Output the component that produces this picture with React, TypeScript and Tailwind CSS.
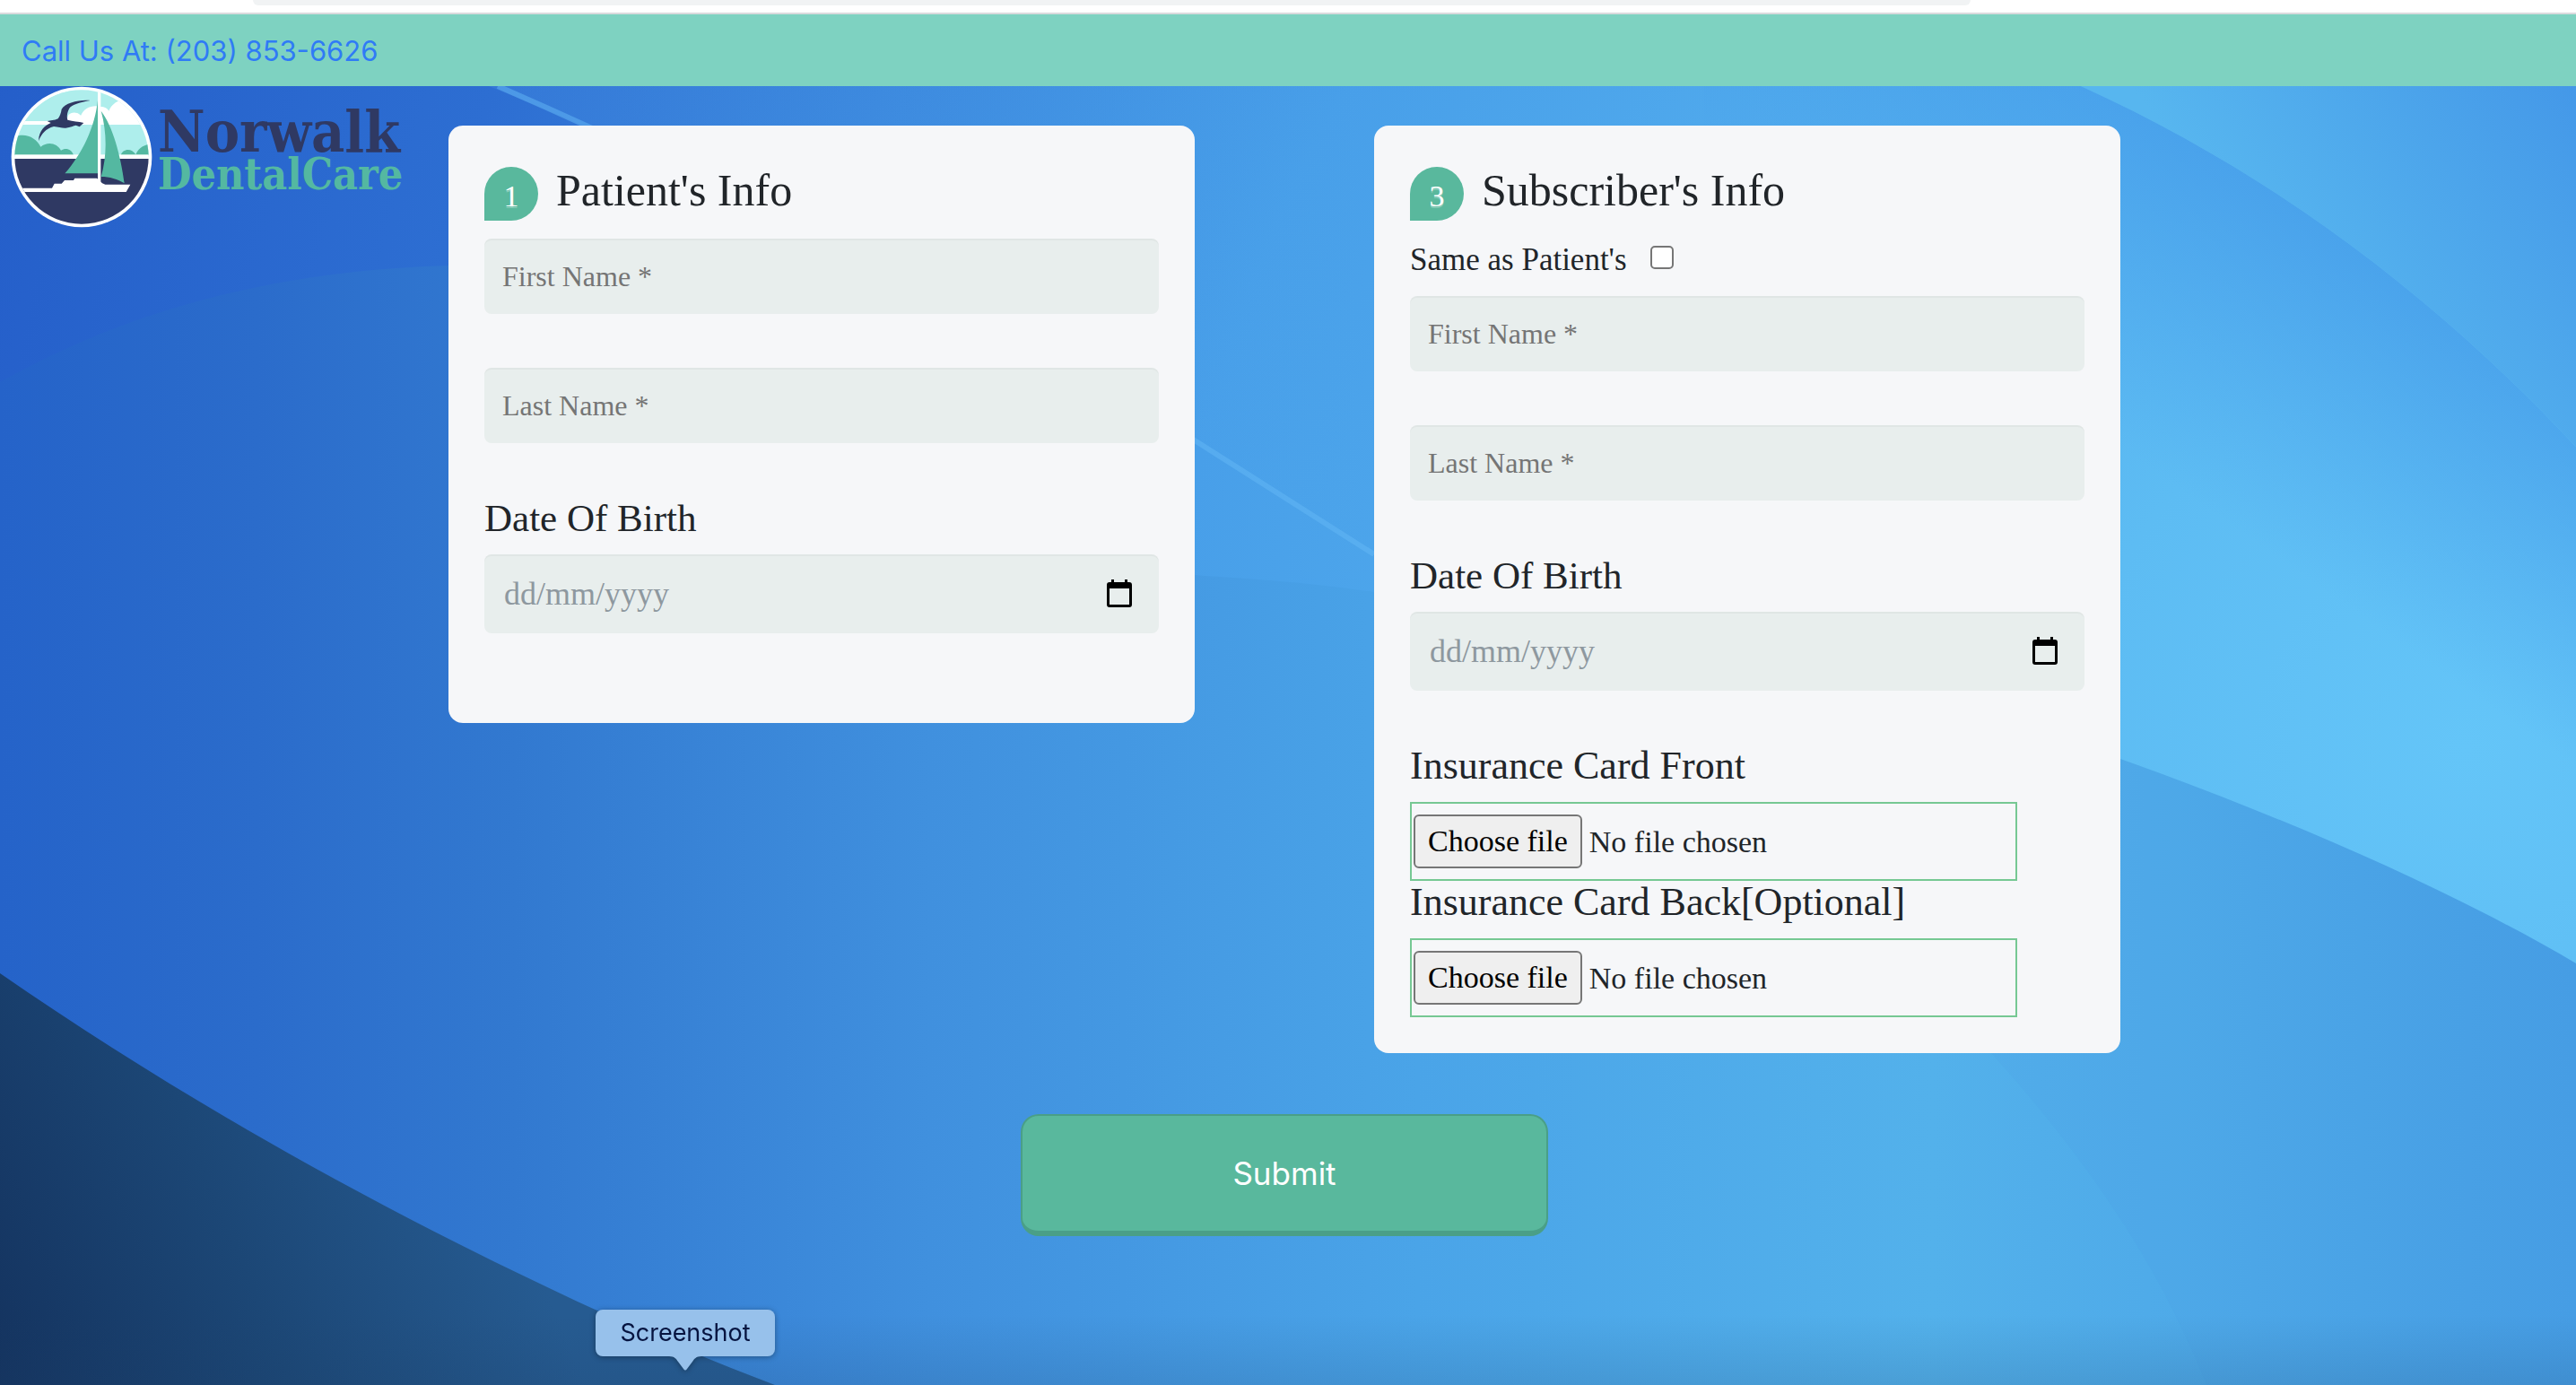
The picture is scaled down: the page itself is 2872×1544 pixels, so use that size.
import React, { useId, useRef, useState } from "react";

function Backdrop() {
  return (
    <svg
      aria-hidden="true"
      viewBox="0 0 2872 1448"
      preserveAspectRatio="none"
      className="absolute inset-0 h-full w-full"
    >
      <defs>
        <radialGradient id="sky" gradientUnits="userSpaceOnUse" cx="2750" cy="740" r="2900">
          <stop offset="0" stopColor="#64c5f8" />
          <stop offset="0.15" stopColor="#5dbcf3" />
          <stop offset="0.3" stopColor="#53aeee" />
          <stop offset="0.5" stopColor="#489fe9" />
          <stop offset="0.66" stopColor="#3a86dd" />
          <stop offset="0.8" stopColor="#2d6ed2" />
          <stop offset="1" stopColor="#245dc9" />
        </radialGradient>
        <linearGradient id="ray" x1="0" y1="0" x2="1" y2="0">
          <stop offset="0" stopColor="#4a97e6" stopOpacity="0.25" />
          <stop offset="1" stopColor="#56b2f0" stopOpacity="0" />
        </linearGradient>
        <linearGradient id="wave" gradientUnits="userSpaceOnUse" x1="0" y1="0" x2="2872" y2="0">
          <stop offset="0" stopColor="#2563c9" />
          <stop offset="0.1" stopColor="#2b6ccb" />
          <stop offset="0.2" stopColor="#3279d0" />
          <stop offset="0.36" stopColor="#4090de" />
          <stop offset="0.55" stopColor="#4aa4e8" />
          <stop offset="0.75" stopColor="#53b1eb" />
          <stop offset="1" stopColor="#479fe5" />
        </linearGradient>
        <linearGradient id="corner" gradientUnits="userSpaceOnUse" x1="2560" y1="240" x2="2872" y2="0">
          <stop offset="0" stopColor="#57b6ef" />
          <stop offset="1" stopColor="#4498e8" />
        </linearGradient>
        <linearGradient id="edge" gradientUnits="userSpaceOnUse" x1="2640" y1="150" x2="2430" y2="450">
          <stop offset="0" stopColor="#469eea" stopOpacity="0.9" />
          <stop offset="1" stopColor="#4aa3ec" stopOpacity="0" />
        </linearGradient>
        <linearGradient id="deep" gradientUnits="userSpaceOnUse" x1="0" y1="1448" x2="560" y2="1220">
          <stop offset="0" stopColor="#14335f" />
          <stop offset="0.5" stopColor="#1c4776" />
          <stop offset="1" stopColor="#265b91" />
        </linearGradient>
        <linearGradient id="floor" x1="0" y1="0" x2="0" y2="1">
          <stop offset="0" stopColor="#1c3f66" stopOpacity="0" />
          <stop offset="1" stopColor="#1c3f66" stopOpacity="0.16" />
        </linearGradient>
      </defs>
      <rect width="2872" height="1448" fill="url(#sky)" />
      <path d="M545 0C820 110 1120 270 1332 397L1532 524V0Z" fill="url(#ray)" />
      <path d="M2320 0C2540 100 2720 240 2872 402V900H1900V0Z" fill="url(#edge)" />
      <path d="M2320 0C2540 100 2720 240 2872 402V0Z" fill="url(#corner)" />
      <path d="M0 330C160 240 330 205 500 200C900 470 1200 530 1332 545C1400 550 1450 552 1532 564C1840 600 2100 660 2364 750C2560 820 2740 900 2872 978V1448H0Z" fill="url(#wave)" />
      <path d="M555 0C830 120 1120 270 1332 395L1532 522" fill="none" stroke="#64b8f5" strokeWidth="6" opacity="0.5" />
      <path d="M2220 1078C2330 1200 2410 1320 2460 1448H2872V978C2740 900 2560 820 2364 750Z" fill="#3d8fe0" opacity="0.06" />
      <path d="M0 989C160 1100 340 1205 520 1295C640 1355 750 1405 864 1448H0Z" fill="url(#deep)" />
      <rect y="1370" width="2872" height="78" fill="url(#floor)" />
    </svg>
  );
}

function Emblem() {
  return (
    <svg viewBox="36 286 474 472" className="size-[158px] shrink-0" role="img" aria-label="Norwalk Dental Care emblem">
      <defs>
        <clipPath id="disc">
          <circle cx="273" cy="522" r="224" />
        </clipPath>
      </defs>
      <circle cx="273" cy="522" r="235" fill="#fff" />
      <g clipPath="url(#disc)">
        <rect x="36" y="286" width="474" height="236" fill="#aeeeec" />
        <path d="M36 402H228C222 380 246 370 270 384C280 358 310 346 336 354C350 354 360 360 364 368C374 344 396 330 420 330H510V414H36Z" fill="#fff" />
        <rect x="36" y="286" width="210" height="116" fill="#aeeeec" />
        <path d="M226 402C222 384 234 372 252 374C262 374 268 380 270 384V404Z" fill="#fff" />
        <path d="M36 460C80 436 120 456 136 488C160 468 192 476 204 500C220 490 240 496 246 516H36Z" fill="#54b8a1" />
        <path d="M404 516C410 494 440 490 454 514C462 494 480 480 510 478V516Z" fill="#54b8a1" />
        <rect x="36" y="514" width="474" height="14" fill="#fff" />
        <rect x="36" y="528" width="474" height="230" fill="#2f3963" />
        <path d="M36 626H174L182 611H206L216 600H246L250 593H324L342 610L352 614H436L422 639H36Z" fill="#fff" />
        <rect x="327" y="286" width="10" height="322" fill="#fff" />
        <path d="M327 332C318 420 276 510 217 577H327Z" fill="#54b8a1" />
        <path d="M338 368C378 420 404 520 416 610C394 596 366 588 338 588C358 520 358 440 338 368Z" fill="#54b8a1" />
        <path d="M302 333C262 330 218 342 206 362C204 376 200 386 194 394C182 400 168 400 158 402L170 408C150 416 130 434 129 468C140 444 152 428 180 420C196 422 208 426 220 425C236 422 246 418 254 416L266 421L280 408C262 402 244 404 226 398C222 384 226 368 234 356C252 342 276 338 302 333Z" fill="#2f3963" />
      </g>
    </svg>
  );
}

function StepTitle({ step, children }: { step: number; children: React.ReactNode }) {
  return (
    <div className="flex items-start gap-5 pt-1.5">
      <span className="flex size-[60px] items-center justify-center rounded-full rounded-bl-none bg-[#59b89d] pt-1.5 text-[34px] leading-none text-white [text-shadow:0_2px_0_rgba(255,255,255,0.3)]">
        {step}
      </span>
      <h2 className="text-[50px] leading-[52px]">{children}</h2>
    </div>
  );
}

const fieldBox =
  "w-full rounded-lg bg-[#e8eeed] px-5 shadow-[inset_0_2px_0_rgba(0,0,0,0.03)]";

function TextField({ label }: { label: string }) {
  return (
    <input
      type="text"
      aria-label={label}
      placeholder={`${label} *`}
      className={`${fieldBox} mb-[60px] block h-[84px] text-[32px] text-[#757575] placeholder:text-[#757575]`}
    />
  );
}

function CalendarIcon() {
  return (
    <svg viewBox="0 0 28 32" className="h-8 w-7" aria-hidden="true">
      <path d="M5 0H8V3H20V0H23V3H25A3 3 0 0 1 28 6V28A3 3 0 0 1 25 31H3A3 3 0 0 1 0 28V6A3 3 0 0 1 3 3H5ZM3 10V28H25V10Z" fill="#000" fillRule="evenodd" />
    </svg>
  );
}

function DateField() {
  const id = useId();
  return (
    <div className="mb-[60px]">
      <label htmlFor={id} className="block pb-4 text-[43px] leading-[48px]">
        Date Of Birth
      </label>
      <div className={`${fieldBox} flex h-[88px] items-center justify-between pr-[30px]`}>
        <input
          id={id}
          type="text"
          inputMode="numeric"
          placeholder="dd/mm/yyyy"
          className="h-full min-w-0 flex-1 bg-transparent pl-0.5 text-[36px] placeholder:text-[#8e989f]"
        />
        <button type="button" aria-label="Open calendar">
          <CalendarIcon />
        </button>
      </div>
    </div>
  );
}

function FileField({ label }: { label: string }) {
  const id = useId();
  const input = useRef<HTMLInputElement>(null);
  const [name, setName] = useState("No file chosen");
  return (
    <div>
      <label htmlFor={id} className="block pb-4 text-[44px] leading-[48px]">
        {label}
      </label>
      <div className="flex h-[88px] w-[90%] items-center gap-2 border-2 border-[#76c893] px-0.5 text-[34px]">
        <input
          ref={input}
          id={id}
          type="file"
          className="sr-only"
          onChange={(e) => setName(e.target.files?.[0]?.name ?? "No file chosen")}
        />
        <button
          type="button"
          onClick={() => input.current?.click()}
          className="h-[60px] rounded-md border-2 border-[#767676] bg-[#efefef] px-3.5 leading-none text-black"
        >
          Choose file
        </button>
        <span>{name}</span>
      </div>
    </div>
  );
}

function Card({ children }: { children: React.ReactNode }) {
  return <section className="rounded-2xl bg-[#f6f7f9] p-10">{children}</section>;
}

export default function App() {
  return (
    <div className="flex min-h-screen flex-col bg-white font-['Liberation_Serif',serif] text-[#212529]">
      <div className="h-4 border-b-2 border-[#d9dadd] bg-white pr-[675px] pl-[282px]">
        <div className="h-1.5 rounded-b-3xl bg-[#f1f3f4]" />
      </div>
      <header className="flex h-20 items-center bg-[#7ed2c1] px-6 pt-0.5">
        <a href="tel:2038536626" className="font-['Inter',sans-serif] text-[31px] text-[#2f7bf6]">
          Call Us At: (203) 853-6626
        </a>
      </header>

      <div className="relative flex-1">
        <Backdrop />
        <main className="relative grid grid-cols-[1fr_minmax(0,1864px)_1fr] pr-2">
          <div className="flex items-start gap-1.5 pl-3">
            <Emblem />
            <div className="pt-7 font-['DejaVu_Serif_Condensed','DejaVu_Serif',serif] font-bold">
              <div className="text-[64px] leading-[46px] text-[#2f3963]">Norwalk</div>
              <div className="text-[48px] leading-[48px] text-[#54b8a1]">DentalCare</div>
            </div>
          </div>
          <form onSubmit={(e) => e.preventDefault()} className="flex flex-col items-center pt-11">
            <div className="grid w-full grid-cols-2 items-start gap-[200px]">
              <Card>
                <StepTitle step={1}>Patient's Info</StepTitle>
                <div className="pt-5">
                  <TextField label="First Name" />
                  <TextField label="Last Name" />
                  <DateField />
                </div>
              </Card>
              <Card>
                <StepTitle step={3}>Subscriber's Info</StepTitle>
                <div className="pt-5">
                  <label className="flex h-16 items-start gap-[26px] pt-1 text-[35px] leading-[40px]">
                    Same as Patient's
                    <input
                      type="checkbox"
                      className="mt-1 size-[26px] appearance-none rounded-[5px] border-2 border-[#767676] bg-white checked:bg-[#2f7bf6]"
                    />
                  </label>
                  <TextField label="First Name" />
                  <TextField label="Last Name" />
                  <DateField />
                  <FileField label="Insurance Card Front" />
                  <FileField label="Insurance Card Back[Optional]" />
                </div>
              </Card>
            </div>
            <button
              type="submit"
              className="mt-[68px] h-[136px] w-[588px] rounded-[20px] border-2 border-b-[6px] border-[#4a9f87] bg-[#59b89d] font-['Inter',sans-serif] text-[35px] text-white"
            >
              Submit
            </button>
          </form>
        </main>

        <div role="tooltip" className="absolute bottom-4 left-[664px] flex flex-col items-center drop-shadow-[0_1px_3px_rgba(0,0,0,0.35)]">
          <div className="flex h-[52px] w-[200px] items-center justify-center rounded-lg bg-[#97c1eb] font-['Inter',sans-serif] text-[27px] text-[#061440]">
            Screenshot
          </div>
          <svg viewBox="0 0 36 16" className="h-4 w-9" aria-hidden="true">
            <path d="M0 0C6 0 8 3 10 6L16 14Q18 17 20 14L26 6C28 3 30 0 36 0Z" fill="#97c1eb" />
          </svg>
        </div>
      </div>
    </div>
  );
}
